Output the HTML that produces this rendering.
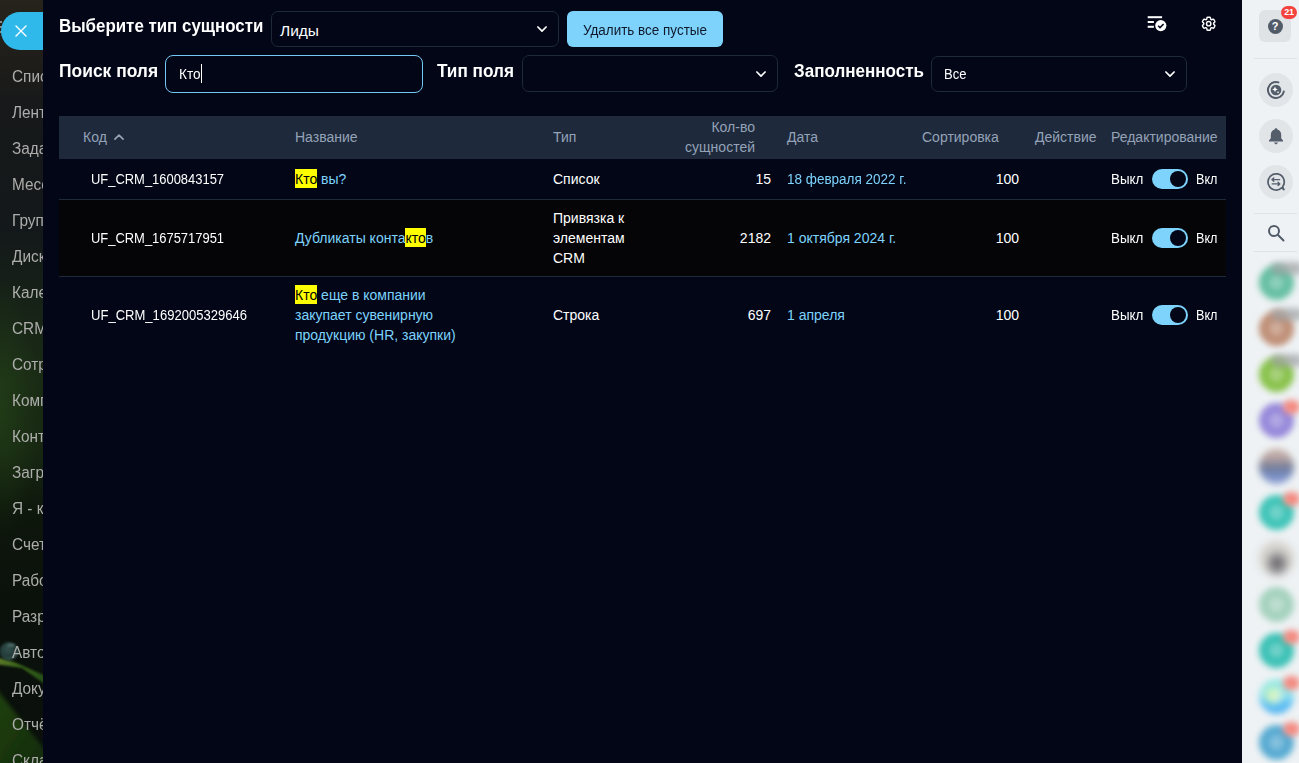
<!DOCTYPE html>
<html lang="ru">
<head>
<meta charset="utf-8">
<title>Поля CRM</title>
<style>
*{box-sizing:border-box;margin:0;padding:0}
html,body{width:1299px;height:763px;overflow:hidden;background:#020617;font-family:"Liberation Sans",sans-serif;color:#fff}
.abs{position:absolute}
.t{position:absolute;white-space:nowrap;line-height:20px;font-size:14px}
/* left strip */
#left{left:0;top:0;width:43px;height:763px;overflow:hidden;
 background:
 radial-gradient(ellipse 40px 130px at 0 410px,rgba(44,86,26,.38),rgba(44,86,26,0) 100%),
 linear-gradient(180deg,#26231b 0px,#201e1a 55px,#17191a 105px,#13181a 230px,#162117 295px,#1a2b15 380px,#172712 450px,#0e170c 510px,#0a110b 600px,#0a0f0c 763px)}
#left .m{position:absolute;left:12px;font-size:16px;line-height:20px;color:#adadab;white-space:nowrap;margin-top:.5px;transform-origin:0 50%;transform:scaleX(.96)}
#close{left:1px;top:12px;width:60px;height:38px;border-radius:19px;background:#2fb9ea}
/* main panel */
#main{left:43px;top:0;width:1199px;height:763px;background:#020617}
/* right bar */
#right{left:1242px;top:0;width:57px;height:763px;background:#eef2f4}
.rc{position:absolute;left:17px;width:34px;height:34px;border-radius:50%;background:#e1e5e8}
.av{position:absolute;left:16.5px;width:35px;height:35px;border-radius:50%;filter:blur(3.4px);opacity:.92}
.av::after{content:"";position:absolute;left:10px;top:10px;width:15px;height:15px;border-radius:50%;background:rgba(255,255,255,.28)}
.av.ph::after{display:none}
.gb{position:absolute;left:29px;width:32px;height:13px;border-radius:6px;background:#9fa1a3;opacity:.7;filter:blur(3.4px)}
.rb{position:absolute;left:40.5px;width:17px;height:14px;border-radius:7px;background:#f48a80;filter:blur(3.3px)}
.h1{font-weight:bold;font-size:18px;line-height:24px;transform-origin:0 50%;transform:scaleX(.938)}
.sx{transform-origin:0 50%}
.chev{position:absolute;width:12px;height:8px}
.chev path{fill:none;stroke:#fff;stroke-width:1.7;stroke-linecap:round;stroke-linejoin:round}
.sel{position:absolute;border:1px solid #1e293b;border-radius:7px;background:#020617}
.hdr{color:#94a3b8}
.lnk{color:#7dd3fc}
mark{background:#ffff00;color:#000;padding:1.8px 0 .7px}
.row{position:absolute;left:59px;width:1167px}
.tog{position:absolute;width:36px;height:20px;border-radius:10px;background:#7dd3fc}
.tog i{position:absolute;right:2px;top:2px;width:16px;height:16px;border-radius:8px;background:#020617}
</style>
</head>
<body>
<div id="left" class="abs">
  <svg class="abs" style="left:0;top:600px;width:43px;height:163px" viewBox="0 600 43 163">
    <defs>
      <filter id="b1" x="-20%" y="-20%" width="140%" height="140%"><feGaussianBlur stdDeviation="1"/></filter>
      <filter id="b2" x="-20%" y="-20%" width="140%" height="140%"><feGaussianBlur stdDeviation="2.2"/></filter>
      <linearGradient id="lg1" x1="0" x2="1" y1="0" y2="0"><stop offset="0" stop-color="#5d7a2a"/><stop offset=".45" stop-color="#3a651b"/><stop offset="1" stop-color="#244c13"/></linearGradient>
      <linearGradient id="lg2" x1="0" x2="1" y1="0" y2="1"><stop offset="0" stop-color="#1f4212"/><stop offset="1" stop-color="#14290c"/></linearGradient>
      <radialGradient id="dg" cx=".45" cy=".4" r=".6"><stop offset="0" stop-color="#34524f"/><stop offset=".7" stop-color="#223937"/><stop offset="1" stop-color="#3f5f5a"/></radialGradient>
    </defs>
    <path d="M-6 686 L50 756 L50 770 L-6 770 Z" fill="url(#lg2)" filter="url(#b2)"/>
    <path d="M-4 657 L14 662 L46 676 L46 685 L22 668 L-4 664 Z" fill="url(#lg1)" filter="url(#b1)"/>
    <ellipse cx="9" cy="651" rx="9.5" ry="9" fill="url(#dg)" filter="url(#b1)"/>
    <ellipse cx="11" cy="645" rx="4" ry="1.6" fill="#7f9f99" opacity=".45" filter="url(#b1)"/>
  </svg>
  <div class="m" style="top:66px">Спис</div>
  <div class="m" style="top:102px">Лент</div>
  <div class="m" style="top:138px">Зада</div>
  <div class="m" style="top:174px">Месс</div>
  <div class="m" style="top:210px">Груп</div>
  <div class="m" style="top:246px">Диск</div>
  <div class="m" style="top:282px">Кале</div>
  <div class="m" style="top:318px">CRM</div>
  <div class="m" style="top:354px">Сотр</div>
  <div class="m" style="top:390px">Комп</div>
  <div class="m" style="top:426px">Конт</div>
  <div class="m" style="top:462px">Загр</div>
  <div class="m" style="top:498px">Я - к</div>
  <div class="m" style="top:534px">Счет</div>
  <div class="m" style="top:570px">Рабо</div>
  <div class="m" style="top:606px">Разр</div>
  <div class="m" style="top:642px">Авто</div>
  <div class="m" style="top:678px">Доку</div>
  <div class="m" style="top:714px">Отчё</div>
  <div class="m" style="top:750px">Скла</div>
  <div class="abs" style="left:0;top:21px;width:2px;height:2px;background:#8a8a8a"></div><div class="abs" style="left:0;top:26px;width:2px;height:2px;background:#8a8a8a"></div><div class="abs" style="left:0;top:31px;width:2px;height:2px;background:#8a8a8a"></div>
  <div id="close" class="abs"><svg style="position:absolute;left:13px;top:12px;width:14px;height:14px" viewBox="0 0 14 14"><path d="M2 2 L12 12 M12 2 L2 12" stroke="#fff" stroke-width="1.4" fill="none" stroke-linecap="round"/></svg></div>
</div>

<div id="main" class="abs"></div>

<!-- top controls (absolute to page) -->
<div class="t h1" id="t1" style="left:59px;top:13.5px">Выберите тип сущности</div>
<div class="sel" style="left:271px;top:11px;width:288px;height:36px"></div>
<div class="t" id="t2" style="left:280px;top:20.8px;font-size:15.5px">Лиды</div>
<div class="abs" id="btn" style="left:567px;top:11px;width:156px;height:36px;border-radius:6px;background:#7dd3fc"></div>
<div class="t sx" id="t3" style="left:583px;top:20.3px;color:#0f172a;transform:scaleX(.961)">Удалить все пустые</div>

<div class="t h1" id="t4" style="left:59px;top:58.5px;transform:scaleX(.968)">Поиск поля</div>
<div class="sel" style="left:165px;top:55px;width:258px;height:38px;border-color:#72c8f4;border-radius:8px"></div>
<div class="t sx" id="t5" style="left:179px;top:64px;transform:scaleX(.975)">Кто</div>
<div class="abs" style="left:201px;top:64px;width:1px;height:19px;background:#fff"></div>
<div class="t h1" id="t6" style="left:437px;top:58.5px;transform:scaleX(.955)">Тип поля</div>
<div class="sel" style="left:522px;top:55px;width:256px;height:37px"></div>
<div class="t h1" id="t7" style="left:793.7px;top:58.5px;transform:scaleX(.946)">Заполненность</div>
<div class="sel" style="left:931px;top:56px;width:256px;height:36px"></div>
<div class="t sx" id="t8" style="left:944px;top:64px;transform:scaleX(.93)">Все</div>

<!-- table -->
<div class="row" style="top:116px;height:43px;background:#1e293b"></div>
<div class="row" style="top:199px;height:78px;background:#050507;border-top:1px solid #1e293b;border-bottom:1px solid #1e293b"></div>

<div class="t hdr" id="h1" style="left:83px;top:127px">Код</div>
<div class="t hdr" id="h2" style="left:295px;top:127px">Название</div>
<div class="t hdr" id="h3" style="left:553px;top:127px">Тип</div>
<div class="t hdr" id="h4" style="right:544px;top:117px;text-align:right">Кол-во<br>сущностей</div>
<div class="t hdr" id="h5" style="left:787px;top:127px">Дата</div>
<div class="t hdr" id="h6" style="left:922px;top:127px">Сортировка</div>
<div class="t hdr" id="h7" style="left:1035px;top:127px">Действие</div>
<div class="t hdr" id="h8" style="left:1111px;top:127px">Редактирование</div>

<!-- row 1 -->
<div class="t sx" id="r1a" style="transform:scaleX(0.924);left:91px;top:169px">UF_CRM_1600843157</div>
<div class="t lnk" id="r1b" style="left:295px;top:169px"><mark>Кто</mark> вы?</div>
<div class="t" id="r1c" style="left:553px;top:169px">Список</div>
<div class="t" id="r1d" style="right:528px;top:169px">15</div>
<div class="t lnk sx" id="r1e" style="transform:scaleX(0.965);left:787px;top:169px">18 февраля 2022 г.</div>
<div class="t" id="r1f" style="right:280px;top:169px">100</div>
<div class="t sx" id="r1g" style="transform:scaleX(.955);left:1111px;top:169px">Выкл</div>
<div class="tog" style="left:1152px;top:169px"><i></i></div>
<div class="t sx" id="r1h" style="transform:scaleX(.9);left:1196px;top:169px">Вкл</div>

<!-- row 2 -->
<div class="t sx" id="r2a" style="transform:scaleX(0.924);left:91px;top:228px">UF_CRM_1675717951</div>
<div class="t lnk" id="r2b" style="left:295px;top:228px">Дубликаты конта<mark>кто</mark>в</div>
<div class="t" id="r2c" style="left:553px;top:208px">Привязка к<br>элементам<br>CRM</div>
<div class="t" id="r2d" style="right:528px;top:228px">2182</div>
<div class="t lnk" id="r2e" style="left:787px;top:228px">1 октября 2024 г.</div>
<div class="t" id="r2f" style="right:280px;top:228px">100</div>
<div class="t sx" id="r2g" style="transform:scaleX(.955);left:1111px;top:228px">Выкл</div>
<div class="tog" style="left:1152px;top:228px"><i></i></div>
<div class="t sx" id="r2h" style="transform:scaleX(.9);left:1196px;top:228px">Вкл</div>

<!-- row 3 -->
<div class="t sx" id="r3a" style="transform:scaleX(0.932);left:91px;top:305px">UF_CRM_1692005329646</div>
<div class="t lnk" id="r3b" style="left:295px;top:285px"><mark>Кто</mark> еще в компании<br>закупает сувенирную<br>продукцию (HR, закупки)</div>
<div class="t" id="r3c" style="left:553px;top:305px">Строка</div>
<div class="t" id="r3d" style="right:528px;top:305px">697</div>
<div class="t lnk" id="r3e" style="left:787px;top:305px">1 апреля</div>
<div class="t" id="r3f" style="right:280px;top:305px">100</div>
<div class="t sx" id="r3g" style="transform:scaleX(.955);left:1111px;top:305px">Выкл</div>
<div class="tog" style="left:1152px;top:305px"><i></i></div>
<div class="t sx" id="r3h" style="transform:scaleX(.9);left:1196px;top:305px">Вкл</div>


<!-- chevrons -->
<svg class="chev" style="left:536px;top:25px" viewBox="0 0 12 8"><path d="M1.9 2 L6 6.1 L10.1 2"/></svg>
<svg class="chev" style="left:755px;top:70px" viewBox="0 0 12 8"><path d="M1.9 2 L6 6.1 L10.1 2"/></svg>
<svg class="chev" style="left:1164px;top:70.2px" viewBox="0 0 12 8"><path d="M1.9 2 L6 6.1 L10.1 2"/></svg>
<!-- sort arrow -->
<svg class="abs" style="left:112px;top:132px;width:14px;height:10px" viewBox="0 0 14 10"><path d="M2.9 7.2 L7 3.1 L11.1 7.2" fill="none" stroke="#94a3b8" stroke-width="1.7" stroke-linecap="round" stroke-linejoin="round"/></svg>
<!-- list-check icon -->
<svg class="abs" style="left:1145px;top:13px;width:26px;height:22px" viewBox="0 0 26 22">
  <rect x="2.7" y="3.2" width="14.4" height="2" fill="#fff"/>
  <rect x="2.7" y="8" width="6.2" height="2" fill="#fff"/>
  <rect x="2.7" y="12.8" width="6.2" height="2" fill="#fff"/>
  <circle cx="15.8" cy="12.6" r="5.6" fill="#fff"/>
  <path d="M13.2 12.8 L15 14.6 L18.6 10.9" fill="none" stroke="#020617" stroke-width="1.5"/>
</svg>
<!-- gear icon -->
<svg class="abs" style="left:1199.6px;top:14.7px;width:17.4px;height:17.4px" viewBox="0 0 24 24" fill="none" stroke="#fff" stroke-width="2" stroke-linecap="round" stroke-linejoin="round">
  <path d="M9.594 3.94c.09-.542.56-.94 1.11-.94h2.593c.55 0 1.02.398 1.11.94l.213 1.281c.063.374.313.686.645.87.074.04.147.083.22.127.325.196.72.257 1.075.124l1.217-.456a1.125 1.125 0 0 1 1.37.49l1.296 2.247a1.125 1.125 0 0 1-.26 1.431l-1.003.827c-.293.241-.438.613-.43.992a7.723 7.723 0 0 1 0 .255c-.008.378.137.75.43.991l1.004.827c.424.35.534.955.26 1.43l-1.298 2.247a1.125 1.125 0 0 1-1.369.491l-1.217-.456c-.355-.133-.75-.072-1.076.124a6.47 6.47 0 0 1-.22.128c-.331.183-.581.495-.644.869l-.213 1.281c-.09.543-.56.94-1.11.94h-2.594c-.55 0-1.019-.398-1.11-.94l-.213-1.281c-.062-.374-.312-.686-.644-.87a6.52 6.52 0 0 1-.22-.127c-.325-.196-.72-.257-1.076-.124l-1.217.456a1.125 1.125 0 0 1-1.369-.49l-1.297-2.247a1.125 1.125 0 0 1 .26-1.431l1.004-.827c.292-.24.437-.613.43-.991a6.932 6.932 0 0 1 0-.255c.007-.38-.138-.751-.43-.992l-1.004-.827a1.125 1.125 0 0 1-.26-1.43l1.297-2.247a1.125 1.125 0 0 1 1.37-.491l1.216.456c.356.133.751.072 1.076-.124.072-.044.146-.086.22-.128.332-.183.582-.495.644-.869l.214-1.28Z"/>
  <path d="M15 12a3 3 0 1 1-6 0 3 3 0 0 1 6 0Z"/>
</svg>

<div id="right" class="abs">
  <div class="abs" style="left:17px;top:10px;width:32px;height:32px;border-radius:6px;background:#dfe3e6"></div>
  <div class="abs" style="left:25.5px;top:18.5px;width:15px;height:15px;border-radius:50%;background:#525c69;color:#fff;font-weight:bold;font-size:11px;line-height:15px;text-align:center">?</div>
  <div class="abs" style="left:39px;top:6px;width:16px;height:13px;border-radius:6.5px;background:#f4433e;color:#fff;font-weight:bold;font-size:9px;line-height:13px;text-align:center;letter-spacing:-.3px">21</div>
  <div class="abs" style="left:12px;top:58px;width:43px;height:1px;background:#dfe3e6"></div>
  <div class="rc" style="top:73px"></div>
  <div class="rc" style="top:119px"></div>
  <div class="rc" style="top:165px"></div>
  <div class="abs" style="left:12px;top:213px;width:43px;height:1px;background:#dfe3e6"></div>
  <div class="abs" style="left:12px;top:251px;width:43px;height:1px;background:#dfe3e6"></div>
  <!-- copilot -->
  <svg class="abs" style="left:24px;top:80px;width:20px;height:20px" viewBox="0 0 20 20" fill="none" stroke="#545d6a" stroke-width="2" stroke-linecap="round">
    <path d="M17.8 11.6 A8 8 0 1 1 12.4 2.4"/>
    <circle cx="10" cy="10" r="5.3" fill="#545d6a" stroke="none"/>
    <path d="M9 6.6 L9.8 8.6 L11.8 9.4 L9.8 10.2 L9 12.2 L8.2 10.2 L6.2 9.4 L8.2 8.6 Z" fill="#fff" stroke="none"/>
    <path d="M12 10.8 L12.4 11.8 L13.4 12.2 L12.4 12.6 L12 13.6 L11.6 12.6 L10.6 12.2 L11.6 11.8 Z" fill="#fff" stroke="none"/>
  </svg>
  <!-- bell -->
  <svg class="abs" style="left:25px;top:127px;width:18px;height:19px" viewBox="0 0 18 19">
    <path d="M9 1.2 C9.9 1.2 10.4 1.8 10.4 2.6 C12.9 3.3 14.2 5.4 14.2 8 L14.2 11.2 L16 13.6 L16 14.4 L2 14.4 L2 13.6 L3.8 11.2 L3.8 8 C3.8 5.4 5.1 3.3 7.6 2.6 C7.6 1.8 8.1 1.2 9 1.2 Z" fill="#545d6a"/>
    <path d="M6.9 15.6 H11.1 L9.6 17.3 H8.4 Z" fill="#545d6a"/>
  </svg>
  <!-- chat/exchange -->
  <svg class="abs" style="left:23px;top:171px;width:22px;height:22px" viewBox="0 0 22 22" fill="none" stroke="#545d6a" stroke-width="1.7" stroke-linecap="round" stroke-linejoin="round">
    <path d="M16.6 16.9 A8.1 8.1 0 1 1 17.6 15.8 L18.9 18.6 Z"/>
    <path d="M14.6 8.6 H7 M8.8 6.9 L6.9 8.6 L8.8 10.3" stroke-width="1.3"/>
    <path d="M7.2 12.9 H14.8 M13 11.2 L14.9 12.9 L13 14.6" stroke-width="1.3"/>
  </svg>
  <!-- search -->
  <svg class="abs" style="left:24px;top:223px;width:20px;height:20px" viewBox="0 0 20 20" fill="none" stroke="#525c69" stroke-width="2" stroke-linecap="round">
    <circle cx="8" cy="8" r="5"/><path d="M12 12 L17.5 17.5"/>
  </svg>
  <!-- avatars (blurred) -->
  <div class="av" style="top:264.5px;background:#58ba9b"></div><div class="gb" style="top:262px"></div>
  <div class="av" style="top:310.5px;background:#bb866b"></div><div class="gb" style="top:308px"></div>
  <div class="av" style="top:356.5px;background:#7fbe3c"></div><div class="gb" style="top:354px"></div>
  <div class="av" style="top:402.5px;background:#8e7fd8"></div><div class="rb" style="top:400px"></div>
  <div class="av ph" style="top:448.5px;background:linear-gradient(180deg,#c8aca2 0,#ab999b 30%,#68728f 52%,#6c84c0 76%,#8c9cd4 100%);filter:blur(3.8px)"></div>
  <div class="av" style="top:494.5px;background:#2fc0b2"></div><div class="rb" style="top:492px"></div>
  <div class="av ph" style="top:540.5px;background:radial-gradient(ellipse 12px 13px at 52% 64%,#55545a 0,#737176 50%,#d2cfc9 100%);filter:blur(4px)"></div>
  <div class="av" style="top:586.5px;background:#9fcfba"></div>
  <div class="av" style="top:632.5px;background:#2bbdb0"></div><div class="rb" style="top:630px"></div>
  <div class="av" style="top:678.5px;background:radial-gradient(circle at 40% 46%,#d8f08a 0,#b8f0c0 18%,rgba(160,235,215,0) 42%),linear-gradient(180deg,#8eeae2 0,#8ee2ee 45%,#4fb9f5 72%,#49b0f0 100%)"></div><div class="rb" style="top:676px"></div>
  <div class="av" style="top:724.5px;background:#4aa4cf"></div><div class="rb" style="top:722px"></div>
</div>
</body>
</html>
